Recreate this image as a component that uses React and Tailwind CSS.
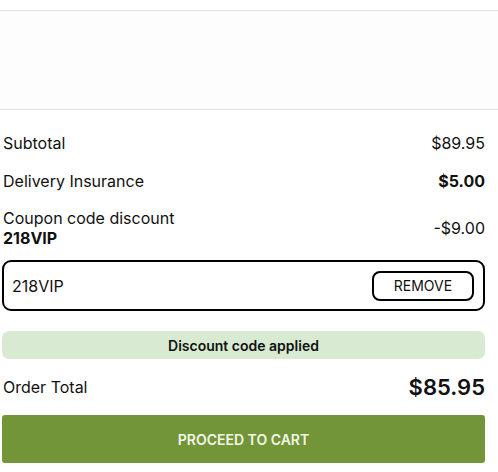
import React from 'react';

const App = () => {
    return (
        <div className="min-h-screen bg-white text-[#111] font-['Inter',sans-serif]">
            {/* empty product area */}
            <div className="mt-[10px] h-[100px] border-y border-[#e2e2e2] bg-[#fdfdfd]"></div>

            <div className="pl-[2px] pr-[13px] pt-[21px]">
                {/* Summary rows */}
                <div className="flex flex-col gap-[14px] pl-px text-[16px]">
                    <div className="flex justify-between items-center leading-6">
                        <span>Subtotal</span>
                        <span>$89.95</span>
                    </div>
                    <div className="flex justify-between items-center leading-6">
                        <span>Delivery Insurance</span>
                        <span className="font-bold">$5.00</span>
                    </div>
                    <div className="flex justify-between items-center leading-5 pt-px">
                        <div className="flex flex-col">
                            <span>Coupon code discount</span>
                            <span className="font-bold">218VIP</span>
                        </div>
                        <span>-$9.00</span>
                    </div>
                </div>

                {/* Coupon input */}
                <div className="mt-[12px] h-[51px] flex items-center justify-between border-2 border-black rounded-[9px] pl-[8px] pr-[9px]">
                    <span className="text-[16px]">218VIP</span>
                    <button className="w-[102px] h-[30px] border-2 border-black rounded-[8px] text-[14px] font-normal text-[#111]">
                        REMOVE
                    </button>
                </div>

                {/* Status */}
                <div className="mt-[20px] h-[28px] flex items-center justify-center rounded-[7px] bg-[#d8ebd2] text-[14px] font-semibold">
                    Discount code applied
                </div>

                {/* Order total */}
                <div className="mt-[14px] h-[28px] flex justify-between items-center">
                    <span className="text-[16px] pl-px">Order Total</span>
                    <span className="text-[22px] font-semibold">$85.95</span>
                </div>

                <button className="mt-[14px] w-full h-[48px] rounded-[3px] bg-[#729537] text-[#f2f6ea] text-[14px] font-semibold">
                    PROCEED TO CART
                </button>
            </div>
        </div>
    );
};

export default App;
